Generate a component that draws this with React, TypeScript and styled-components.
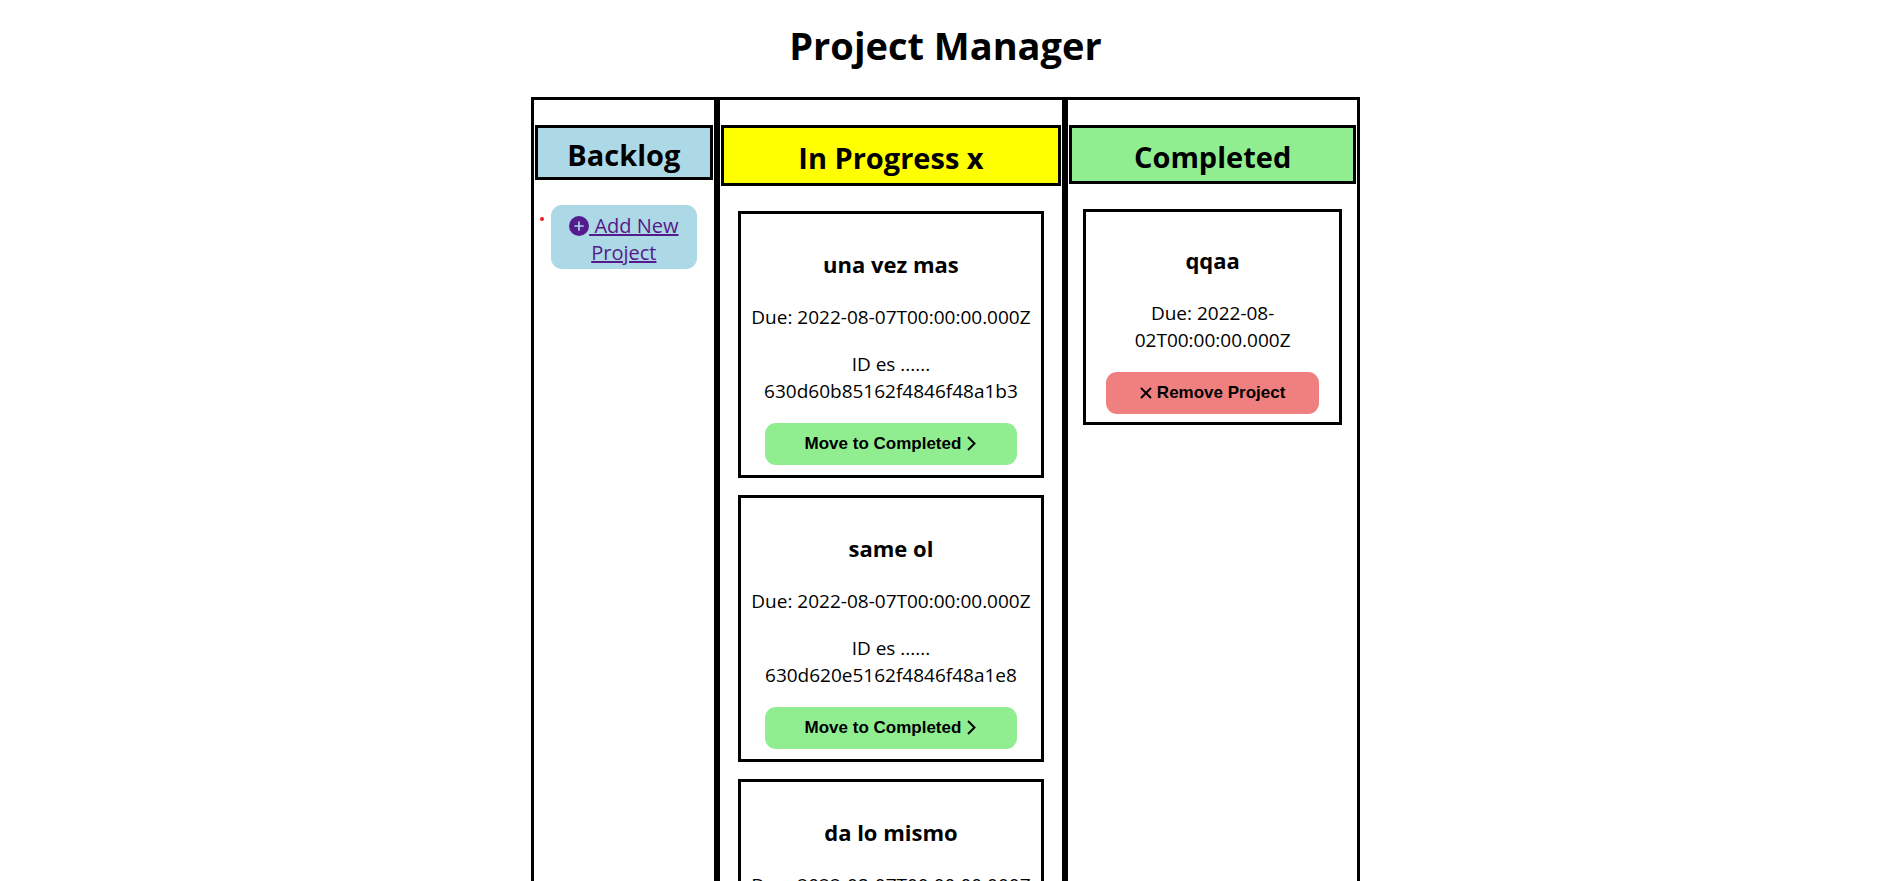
import React from "react";
import styled, { createGlobalStyle } from "styled-components";

const GlobalStyle = createGlobalStyle`
  * { box-sizing: border-box; }
  html { scrollbar-width: none; }
  body {
    margin: 0;
    padding-left: 3px;
    background: #fff;
    color: #000;
    font: 400 19px/27px "Segoe UI", "Open Sans", sans-serif;
    text-align: center;
  }
`;

const Title = styled.h1`
  margin: 0;
  padding: 19px 0 25px;
  font-size: 38px;
  line-height: 53px;
`;

const Board = styled.main`
  display: grid;
  grid-template-columns: 186fr 348fr 295fr;
  width: 44%;
  min-width: 820px;
  margin: 0 auto;
  border-top: 3px solid #000;
`;

const Column = styled.section`
  min-width: 0;
  padding: 25px 1px 0;
  border: solid #000;
  border-width: 0 3px 3px;
`;

const ColumnTitle = styled.h2<{ $color: string; $pad: number }>`
  margin: 0 0 25px;
  padding: ${(p) => p.$pad + 2}px 5px ${(p) => p.$pad - 2}px;
  border: 3px solid #000;
  background: ${(p) => p.$color};
  font-size: 29px;
  line-height: 39px;
`;

const AddItems = styled.ul`
  margin: 0;
  padding: 0 16px;
  list-style: none;
`;

const AddItem = styled.li`
  position: relative;

  &::before {
    content: "";
    position: absolute;
    left: -11px;
    top: 12px;
    width: 4px;
    height: 4px;
    border-radius: 50%;
    background: #f01a1a;
  }
`;

const AddLink = styled.a`
  display: block;
  padding: 7px 10px 3px;
  border-radius: 11px;
  background: lightblue;
  color: #551a8b;
  font-size: 20px;
  text-decoration-thickness: 2px;

  svg {
    vertical-align: -3px;
  }
`;

const Card = styled.article<{ $pad: number }>`
  width: 90%;
  margin: 0 auto 17px;
  padding: ${(p) => p.$pad}px;
  border: 3px solid #000;
`;

const CardTitle = styled.h3`
  margin: 25px 0 24px;
  font-size: 22px;
  line-height: 31px;
`;

const CardText = styled.p`
  margin: 0 0 18px;

  & + & {
    margin-top: 20px;
  }
`;

const CardButton = styled.button<{ $color: string }>`
  display: flex;
  align-items: center;
  justify-content: center;
  gap: 5px;
  width: 90%;
  height: 42px;
  margin: 0 auto;
  padding: 0;
  border: 0;
  border-radius: 11px;
  background: ${(p) => p.$color};
  color: #000;
  font: 700 17px/20px "Liberation Sans", Arial, sans-serif;
`;

const PlusIcon = () => (
  <svg width="20" height="20" viewBox="0 0 20 20" aria-hidden="true">
    <circle cx="10" cy="10" r="10" fill="currentColor" />
    <path d="M10 6v8M6 10h8" stroke="lightblue" strokeWidth="1.7" strokeLinecap="round" />
  </svg>
);

const ChevronIcon = () => (
  <svg width="11" height="18" viewBox="0 0 11 18" fill="none" aria-hidden="true">
    <path d="M2 2l6.5 6.5L2 15" stroke="currentColor" strokeWidth="2" />
  </svg>
);

const CrossIcon = () => (
  <svg width="12" height="12" viewBox="0 0 12 12" fill="none" aria-hidden="true">
    <path d="M1 1l10 10M11 1L1 11" stroke="currentColor" strokeWidth="1.9" />
  </svg>
);

const inProgress = [
  { title: "una vez mas", id: "630d60b85162f4846f48a1b3" },
  { title: "same ol", id: "630d620e5162f4846f48a1e8" },
  { title: "da lo mismo", id: "630d621f5162f4846f48a1f2" },
];

export default function App() {
  return (
    <>
      <GlobalStyle />
      <Title>Project Manager</Title>
      <Board>
        <Column>
          <ColumnTitle $color="lightblue" $pad={5}>Backlog</ColumnTitle>
          <AddItems>
            <AddItem>
              <AddLink href="#new">
                <PlusIcon /> Add New Project
              </AddLink>
            </AddItem>
          </AddItems>
        </Column>
        <Column>
          <ColumnTitle $color="yellow" $pad={8}>In Progress x</ColumnTitle>
          {inProgress.map((project) => (
            <Card key={project.id} $pad={10}>
              <CardTitle>{project.title}</CardTitle>
              <CardText>Due: 2022-08-07T00:00:00.000Z</CardText>
              <CardText>ID es ...... {project.id}</CardText>
              <CardButton type="button" $color="lightgreen">
                Move to Completed <ChevronIcon />
              </CardButton>
            </Card>
          ))}
        </Column>
        <Column>
          <ColumnTitle $color="lightgreen" $pad={7}>Completed</ColumnTitle>
          <Card $pad={8}>
            <CardTitle>qqaa</CardTitle>
            <CardText>Due: 2022-08-02T00:00:00.000Z</CardText>
            <CardButton type="button" $color="lightcoral">
              <CrossIcon /> Remove Project
            </CardButton>
          </Card>
        </Column>
      </Board>
    </>
  );
}
